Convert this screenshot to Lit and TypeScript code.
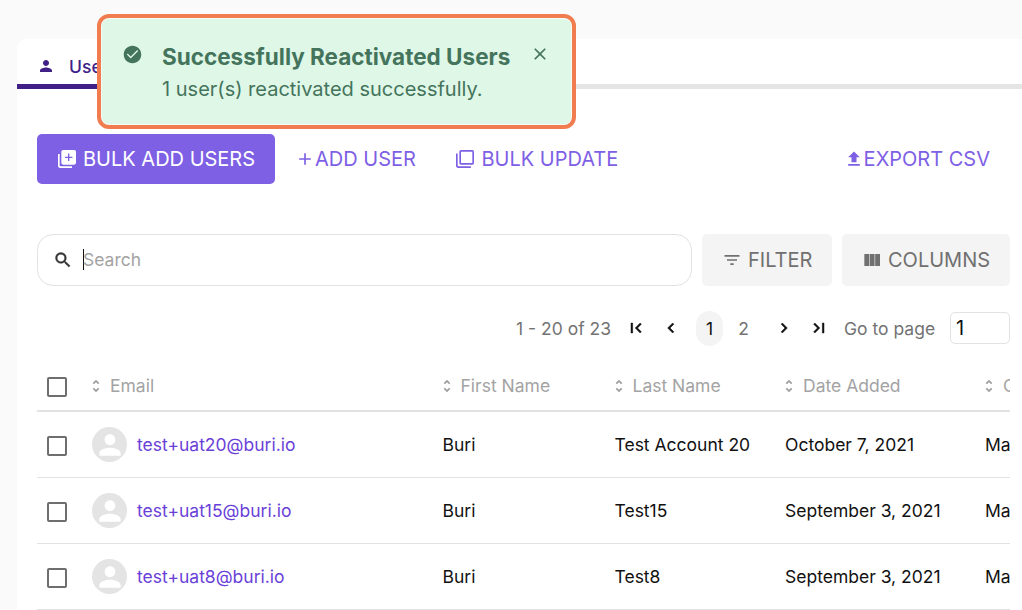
import { LitElement, html, css, svg } from "lit";
import { customElement } from "lit/decorators.js";

interface UserRow {
  email: string;
  first: string;
  last: string;
  added: string;
  role: string;
}

const ROWS: UserRow[] = [
  { email: "test+uat20@buri.io", first: "Buri", last: "Test Account 20", added: "October 7, 2021", role: "Ma" },
  { email: "test+uat15@buri.io", first: "Buri", last: "Test15", added: "September 3, 2021", role: "Ma" },
  { email: "test+uat8@buri.io", first: "Buri", last: "Test8", added: "September 3, 2021", role: "Ma" },
];

const COLUMNS = ["Email", "First Name", "Last Name", "Date Added", "C"];

const PATHS: Record<string, unknown> = {
  person: svg`<path d="M12 12c2.21 0 4-1.79 4-4s-1.79-4-4-4-4 1.79-4 4 1.79 4 4 4zm0 2c-2.67 0-8 1.34-8 4v2h16v-2c0-2.66-5.33-4-8-4z"/>`,
  check: svg`<path d="M12 2C6.48 2 2 6.48 2 12s4.48 10 10 10 10-4.480 10-10S17.520 2 12 2zm-2 14.500l-4.500-4.500 1.100-1.100L10 14.300l7.400-7.400 1.100 1.100-8.500 8.500z"/>`,
  close: svg`<path d="M19 6.41L17.59 5 12 10.59 6.41 5 5 6.41 10.59 12 5 17.59 6.41 19 12 13.41 17.59 19 19 17.59 13.41 12z"/>`,
  bulkAdd: svg`<path d="M1.2 6v14.2c0 1.4 1.1 2.6 2.6 2.6H18v-2H4.2c-.6 0-1-.4-1-1V6z"/><path fill-rule="evenodd" d="M7.4 1.2h13.2a2.2 2.2 0 0 1 2.2 2.2v13.2a2.2 2.2 0 0 1-2.2 2.2H7.4a2.2 2.2 0 0 1-2.2-2.2V3.4a2.2 2.2 0 0 1 2.2-2.2zM13.2 5.5v3.7H9.5v1.600h3.700v3.700h1.600v-3.700h3.700V9.200h-3.700V5.500z"/>`,
  bulkUpdate: svg`<path d="M1.2 5.5v14.7c0 1.4 1.1 2.6 2.6 2.6H19v-2H4.2c-.6 0-1-.4-1-1V5.5z"/><path fill-rule="evenodd" d="M7.2 1.2h13.6a2 2 0 0 1 2 2v13.6a2 2 0 0 1-2 2H7.2a2 2 0 0 1-2-2V3.2a2 2 0 0 1 2-2zM7.2 3.2v13.600h13.600V3.200z"/>`,
  plus: svg`<path d="M19 13h-6v6h-2v-6H5v-2h6V5h2v6h6z"/>`,
  upload: svg`<path d="M9 16h6v-6h4l-7-7-7 7h4zm-4 2h14v2H5z"/>`,
  search: svg`<path d="M15.5 14h-.79l-.28-.27A6.471 6.471 0 0 0 16 9.5 6.5 6.5 0 1 0 9.5 16c1.61 0 3.09-.59 4.23-1.57l.27.28v.79l5 4.99L20.49 19l-4.990-5zm-6 0C7.010 14 5 11.990 5 9.500S7.010 5 9.500 5 14 7.010 14 9.500 11.990 14 9.500 14z"/>`,
  filter: svg`<path d="M10 18h4v-2h-4v2zM3 6v2h18V6H3zm3 7h12v-2H6v2z"/>`,
  columns: svg`<path d="M9.300 19.200h5.800V4.800H9.300zM2.800 19.200h5.800V4.800H2.800zM15.800 4.800v14.400h5.800V4.800z"/>`,
  first: svg`<path d="M18.41 16.59L13.82 12l4.59-4.59L17 6l-6 6 6 6zM6 6h2v12H6z"/>`,
  prev: svg`<path d="M15.41 7.41L14 6l-6 6 6 6 1.41-1.41L10.83 12z"/>`,
  next: svg`<path d="M10 6L8.59 7.41 13.17 12l-4.58 4.59L10 18l6-6z"/>`,
  last: svg`<path d="M5.59 7.41L10.18 12l-4.59 4.59L7 18l6-6-6-6zM16 6h2v12h-2z"/>`,
  sort: svg`<path d="M12 5.83L15.17 9l1.41-1.41L12 3 7.41 7.59 8.83 9 12 5.83zm0 12.34L8.83 15l-1.41 1.41L12 21l4.59-4.59L15.17 15 12 18.17z"/>`,
};

const icon = (name: string, cls: string) =>
  html`<svg class="icon ${cls}" viewBox="0 0 24 24" fill="currentColor" aria-hidden="true">${PATHS[name]}</svg>`;

@customElement("app-root")
export class AppRoot extends LitElement {
  static styles = css`
    :host {
      display: block;
      position: relative;
      width: 1022px;
      height: 610px;
      overflow: hidden;
      box-sizing: border-box;
      padding: 39px 0 0 17px;
      background: #fafafa;
      font-family: Inter, "Liberation Sans", sans-serif;
      font-size: 17.5px;
      color: #111;
    }
    * { box-sizing: border-box; }
    .icon { display: block; flex: none; }
    .card { height: 571px; background: #fff; border-top-left-radius: 10px; }
    .tabs { display: flex; height: 50px; border-bottom: 5px solid #e5e5e5; }
    .tab {
      display: flex; align-items: center; gap: 14px;
      width: 124px; height: 50px; padding: 9px 0 0 20px;
      border-bottom: 5px solid #401f87;
      color: #401f87; font-weight: 500;
    }
    .i-tab { width: 18px; height: 18px; }
    .content { width: 993px; padding: 45px 0 0 20px; }
    .toolbar { display: flex; height: 50px; align-items: center; font-size: 20px; color: #7e60e5; }
    .primary {
      display: flex; align-items: center; width: 238px; height: 50px; padding-left: 20px; gap: 6px;
      background: #7e60e5; color: #fff; border-radius: 5px;
    }
    .i-bulk { width: 20px; height: 20px; }
    .add { display: flex; align-items: center; margin-left: 20px; width: 160px; }
    .i-plus { width: 20px; height: 20px; }
    .update { display: flex; align-items: center; gap: 6.5px; }
    .export { display: flex; align-items: center; margin-left: auto; padding-right: 20px; }
    .i-up { width: 20px; height: 20px; }
    .searchrow { display: flex; gap: 10px; margin-top: 50px; height: 52px; }
    .search {
      display: flex; align-items: center; width: 655px; padding: 0 0 1px 15px;
      border: 1px solid #e2e2e2; border-radius: 16px; color: #a3a3a3;
    }
    .i-search { width: 20px; height: 20px; color: #333; stroke: currentColor; stroke-width: 0.5; }
    .caret { width: 1px; height: 21px; margin: 0 -1px 0 10px; background: #111; }
    .grey {
      display: flex; align-items: center; padding-left: 20px; gap: 6px;
      background: #f4f4f4; color: #707070; border-radius: 5px; font-size: 20px;
    }
    .filter { width: 130px; }
    .columns { width: 168px; }
    .i-grey { width: 20px; height: 20px; }
    .pager { display: flex; align-items: center; height: 34px; margin-top: 25px; color: #737373; }
    .range { width: 110px; margin-left: 479px; }
    .i-nav { width: 20px; height: 20px; color: #111; stroke: currentColor; stroke-width: 0.6; }
    .n-prev { margin-left: 15px; }
    .n-next { margin-left: 17px; }
    .n-last { margin-left: 15px; }
    .page { width: 27px; height: 35px; line-height: 35px; border-radius: 14px; text-align: center; }
    .current { margin-left: 15px; background: #f4f4f4; color: #111; }
    .other { margin-left: 7px; }
    .goto { margin-left: 15px; }
    .field {
      width: 60px; height: 32px; line-height: 30px; margin-left: auto; padding-left: 5px;
      border: 1px solid #e2e2e2; border-radius: 5px; color: #111; font-size: 20px;
    }
    .grid {
      display: grid; grid-template-columns: 55px 350.5px 172px 170.5px 200px 25px;
      align-items: center; overflow: hidden; white-space: nowrap;
    }
    .head { height: 67px; border-bottom: 2px solid #e2e2e2; color: #a3a3a3; padding-top: 16px; }
    .row { height: 66px; border-bottom: 1px solid #e2e2e2; }
    .th { display: flex; align-items: center; gap: 6px; margin-left: -4px; }
    .i-sort { width: 16px; height: 16px; stroke: currentColor; stroke-width: 0.9; }
    .box { width: 20px; height: 20px; margin: 2px 0 0 10px; border: 2px solid #6e6e6e; border-radius: 2px; }
    .user { display: flex; align-items: center; gap: 10px; color: #6a3fd8; }
    .avatar { display: flex; align-items: center; justify-content: center; width: 35px; height: 35px; border-radius: 50%; background: #e4e4e4; color: #fff; }
    .i-user { width: 32px; height: 32px; }
    .toast {
      position: absolute; left: 97px; top: 14px; width: 479px; height: 115px;
      display: flex; align-items: flex-start;
      border: 4px solid #f07c50; border-radius: 12px; background: #dff7e7;
      box-shadow: inset 0 0 0 1px #f4fcf6;
      color: #44745c; padding: 25px 0 0 20px;
    }
    .i-check { width: 21px; height: 21px; margin: 0.5px 0 0 0.5px; }
    .message { margin-left: 19.5px; width: 368px; }
    .title { font-size: 22.5px; line-height: 28px; font-weight: 700; white-space: nowrap; }
    .body { margin-top: 4px; font-size: 20px; line-height: 28px; white-space: nowrap; }
    .i-close { width: 20px; height: 20px; margin-top: 1px; }
  `;

  render() {
    return html`
      <div class="card">
        <div class="tabs"><div class="tab">${icon("person", "i-tab")}<span>Users</span></div></div>
        <div class="content">
          <div class="toolbar">
            <div class="primary">${icon("bulkAdd", "i-bulk")}<span>BULK ADD USERS</span></div>
            <div class="add">${icon("plus", "i-plus")}<span>ADD USER</span></div>
            <div class="update">${icon("bulkUpdate", "i-bulk")}<span>BULK UPDATE</span></div>
            <div class="export">${icon("upload", "i-up")}<span>EXPORT CSV</span></div>
          </div>
          <div class="searchrow">
            <div class="search">${icon("search", "i-search")}<i class="caret"></i><span>Search</span></div>
            <div class="grey filter">${icon("filter", "i-grey")}<span>FILTER</span></div>
            <div class="grey columns">${icon("columns", "i-grey")}<span>COLUMNS</span></div>
          </div>
          <div class="pager">
            <span class="range">1 - 20 of 23</span>
            ${icon("first", "i-nav n-first")}${icon("prev", "i-nav n-prev")}
            <span class="page current">1</span><span class="page other">2</span>
            ${icon("next", "i-nav n-next")}${icon("last", "i-nav n-last")}
            <span class="goto">Go to page</span><span class="field">1</span>
          </div>
          <div class="grid head">
            <i class="box"></i>
            ${COLUMNS.map((c) => html`<div class="th">${icon("sort", "i-sort")}<span>${c}</span></div>`)}
          </div>
          ${ROWS.map(
            (r) => html`<div class="grid row">
              <i class="box"></i>
              <div class="user"><span class="avatar">${icon("person", "i-user")}</span><span>${r.email}</span></div>
              <span>${r.first}</span><span>${r.last}</span><span>${r.added}</span><span>${r.role}</span>
            </div>`
          )}
        </div>
      </div>
      <div class="toast">
        ${icon("check", "i-check")}
        <div class="message">
          <div class="title">Successfully Reactivated Users</div>
          <div class="body">1 user(s) reactivated successfully.</div>
        </div>
        ${icon("close", "i-close")}
      </div>
    `;
  }
}
